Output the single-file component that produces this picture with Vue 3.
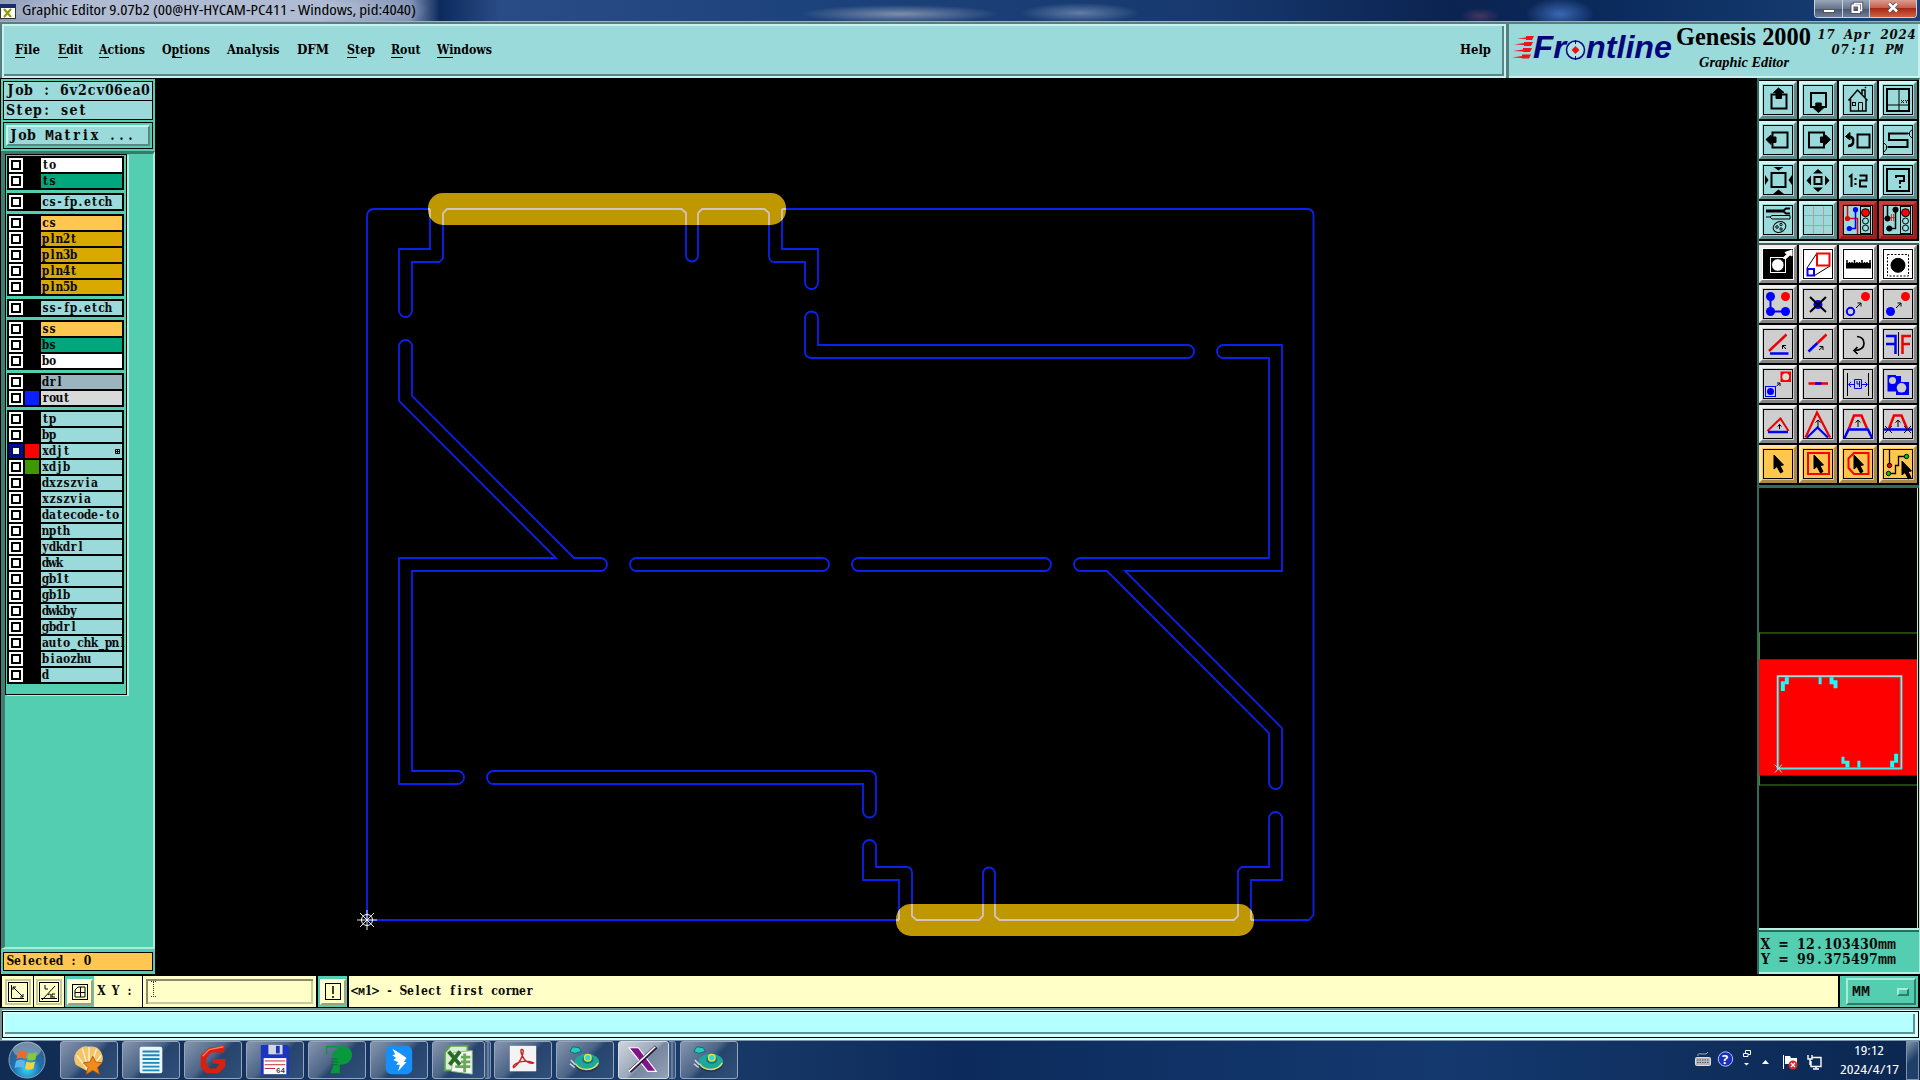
<script setup>
import { h } from 'vue'

// Text fitted to an exact width.
const Fit = (p) =>
  h('svg', { width: p.w + 4, height: p.s * 1.5, style: { display: 'block', overflow: 'visible', flex: 'none' } }, [
    h('text', {
      x: 0, y: p.s * 1.1, textLength: p.w, lengthAdjust: 'spacingAndGlyphs', fill: p.c || '#000',
      'font-family': p.f || '"DejaVu Serif", serif', 'font-size': p.s, 'font-weight': p.b || 700,
      'font-style': p.i ? 'italic' : 'normal', 'font-stretch': 'condensed'
    }, p.t)
  ])
Fit.props = ['t', 'w', 's', 'f', 'b', 'i', 'c']

// Terminal style text: every glyph is centred in a cell of equal width.
// The widest letters take a monospaced face so that they stay inside their cell.
const Cell = (p) => {
  const a = p.a || 7
  const s = p.s || 12
  return h('svg', { width: a * p.t.length, height: s + 3, style: { display: 'block', overflow: 'visible', flex: 'none' } }, [
    h('text', {
      x: [...p.t].map((_, i) => i * a + a / 2).join(' '), y: s - 1, 'text-anchor': 'middle',
      'font-family': '"DejaVu Serif", serif', 'font-size': s, 'font-weight': 700,
      'font-style': p.i ? 'italic' : 'normal', 'font-stretch': 'condensed', fill: '#0a0a0a'
    }, p.t.split(/([mM])/).filter(Boolean).map((part) =>
      /^[mM]$/.test(part)
        ? h('tspan', { 'font-family': '"Liberation Mono", monospace', 'font-size': a / 0.6 }, part)
        : part
    ))
  ])
}
Cell.props = ['t', 'a', 's', 'i']

const menus = [
  { t: 'File', x: 15, w: 25, u: [0, 10] },
  { t: 'Edit', x: 57.5, w: 25, u: [0, 10] },
  { t: 'Actions', x: 99, w: 46, u: [0, 10] },
  { t: 'Options', x: 162, w: 48, u: [10, 10] },
  { t: 'Analysis', x: 227, w: 52.5 },
  { t: 'DFM', x: 297, w: 32 },
  { t: 'Step', x: 346.5, w: 28, u: [0, 10] },
  { t: 'Rout', x: 391, w: 29.5, u: [0, 12] },
  { t: 'Windows', x: 437, w: 55, u: [0, 16] }
].map((m, i, all) => ({ ...m, gap: i ? m.x - all[i - 1].x - all[i - 1].w - 4 : m.x - 4 }))

const W = '#ffffff', G = '#00a67c', B = '#9adada', O = '#ffc650', D = '#d9a900'
const groups = [
  [['to', W], ['ts', G]],
  [['cs-fp.etch', B]],
  [['cs', O], ['pln2t', D], ['pln3b', D], ['pln4t', D], ['pln5b', D]],
  [['ss-fp.etch', B]],
  [['ss', O], ['bs', G], ['bo', W]],
  [['drl', '#9cb4be'], ['rout', '#d9d9d9', '#0a20ff']],
  [['tp', B], ['bp', B], ['xdjt', B, '#ff0000', true], ['xdjb', B, '#3f9800'], ['dxzszvia', B], ['xzszvia', B],
    ['datecode-to', B], ['npth', B], ['ydkdrl', B], ['dwk', B], ['gb1t', B], ['gb1b', B], ['dwkby', B],
    ['gbdrl', B], ['auto_chk_pnl', B], ['biaozhu', B], ['d', B]]
]

const cursor = '<path fill="#000" d="M15 10V24L18 21.500L21.500 28L24 26.500L21 20.500L24.500 20Z"/>'
const light = '<rect x="21.500" y="5.500" width="10" height="27"/><circle cx="26.500" cy="11.700" r="4" fill="#f00"/><circle cx="26.500" cy="20" r="3"/><circle cx="26.500" cy="27" r="3"/>'
const arrow = '<path d="M17 23L22 18M18.500 18H22V21.500"/>'
const up = '<path d="M19 22V15M16.500 17.500L19 15L21.500 17.500"/>'
const trap = '<path stroke="#e00" stroke-width="2.500" d="M10 23.500L15 10.500H22.500L28 23.500"/>'

const tools = [
  '<rect x="12.500" y="13.500" width="15" height="14" stroke-width="2"/><path fill="#000" d="M19.500 7L25 11.500H22.500V17.500H17V11.500H14.500Z"/>',
  '<rect x="12" y="12" width="15" height="14" stroke-width="2"/><path fill="#000" d="M16.800 22H22.200V27H24.500L19.500 31.500L14.500 27H16.800Z"/>',
  '<path stroke-width="1.500" d="M9.500 19.500L18.500 9L28.500 19.500M11.500 18V30H27V18M23 13V9H26V16M26 7L27 6"/><rect x="13.500" y="21.500" width="3" height="3"/><path d="M19.500 30V21.500H23.500V30"/>',
  '<rect x="8" y="8" width="22" height="22" stroke-width="2"/><path d="M8 24H30M20 8V30M22 19L25 22M25 19L22 22M26 19L27.500 20.500L29 19M27.500 20.500V22"/>',
  '<rect x="13.500" y="11.500" width="15" height="15" stroke-width="2"/><path fill="#000" d="M7 18.500L12 14V16H17V21.500H12V23.500Z"/>',
  '<rect x="10" y="11.500" width="15" height="15" stroke-width="2"/><path fill="#000" d="M31.500 18.500L26.500 14V16H21.500V21.500H26.500V23.500Z"/>',
  '<rect x="18.500" y="13.500" width="12" height="13" stroke-width="2"/><path stroke-width="2.500" d="M9 16H12Q15 17 14 22Q13 25 9 25"/><path fill="#000" d="M6.500 15.500L11 11.500V19Z"/>',
  '<path stroke-width="2" d="M29 12.500H10V19H28.500V26H9"/><path d="M33 9L30.500 11V14.500L33 17M28 12.500H31M5 22L7.500 24.500V28L5 31M7 26H10"/>',
  '<rect x="12.500" y="12" width="14" height="14" stroke-width="2"/><path fill="#000" stroke="none" d="M19.500 9.500L14.500 6H24.500ZM9.500 19L6 14V24ZM29.500 19L33 14V24ZM19.500 28.500L25 33H14Z"/>',
  '<rect x="15.500" y="16" width="7" height="7" stroke-width="2"/><path fill="#000" stroke="none" d="M19 8L24 12.500H14ZM7.500 19.500L12 14.500V24.500ZM30.500 19.500L26 14.500V24.500ZM19 31L14 26.500H24Z"/>',
  '<path stroke-width="2" d="M10 16L12.500 14V26M16.500 17V19M16.500 22V24M20.500 14.500H27.500V19.500H21V25.500H28"/>',
  '<rect x="8" y="8" width="22" height="22" stroke-width="2"/><path stroke-width="2" d="M17 17V15H25V20H21V23M21 25V27"/>',
  '<path stroke-width="3" d="M7 10H24"/><path stroke-width="2" d="M31 7.500H27L24 10L27 12.500H31"/><path d="M11 16L13 14.500H31V18H13ZM7 16H11"/><ellipse cx="20.500" cy="26" rx="6.500" ry="5.200" transform="rotate(-25 20.500 26)"/><circle cx="18" cy="26" r="1.300"/><circle cx="22" cy="23.500" r="1.200"/><circle cx="22" cy="28" r="1.200"/>',
  '<path stroke="#b99aa6" d="M14.500 5V33M24.500 5V33M5 14.500H33M5 24.500H33"/>',
  '<path stroke="#e00" stroke-width="1.500" d="M8.500 5V17.500H18.500V33"/><path stroke="#00f" stroke-width="1.500" d="M16.500 9V27.500H10"/><circle cx="16.500" cy="8.700" r="2.600" fill="#00f" stroke="none"/><circle cx="8.500" cy="17.500" r="2.600" fill="#e00" stroke="none"/><circle cx="10.300" cy="27.500" r="2.600" fill="#00f" stroke="none"/>' + light,
  '<path stroke-width="1.500" d="M8.500 5V17.500M16.500 9V27.500H10"/><path stroke="#d33" d="M10 16.500H16M12.500 13V20M14.500 13V20"/><circle cx="16.500" cy="8.700" r="2.600" fill="#000"/><circle cx="8.500" cy="17.500" r="2.600" fill="#000"/><circle cx="10.300" cy="27.500" r="2.600" fill="#000"/>' + light
]
const edits = [
  '<path fill="#000" d="M5 5H33V33H5Z"/><rect x="11.500" y="12.500" width="15" height="15" stroke="#fff"/><circle cx="18.800" cy="20" r="6.300" fill="#fff"/><path fill="#fff" stroke="#fff" d="M24 13L28 9.500L26 7.500L33 5V11L31 9.800L26.500 14Z"/>',
  '<path d="M8 23L18 8M15.500 30.500L31 21"/><rect x="18" y="8.500" width="12.500" height="12" stroke="#f00" stroke-width="2"/><rect x="8.500" y="24" width="6.500" height="6.500" stroke="#00f" stroke-width="2"/>',
  '<path fill="#000" stroke="none" d="M7 18H32V23.500H7Z"/><path stroke-width="1.500" d="M8 15V20M10.500 17V20M13 17V20M15.500 15V20M18 17V20M20.500 17V20M23 15V20M25.500 17V20M28 17V20M31 15V20"/>',
  '<rect x="8.500" y="9.500" width="21" height="21.500" stroke-dasharray="2 1.500"/><circle cx="19" cy="20.300" r="7" fill="#000"/>',
  '<g stroke="none" fill="#00f"><circle cx="11.500" cy="11.500" r="4.500"/><circle cx="11.500" cy="26.500" r="4.500"/><circle cx="26.500" cy="26.500" r="4.500"/><circle cx="26.500" cy="11.500" r="4.500" fill="#f00"/></g><path stroke="#00f" stroke-width="2" d="M11.500 11V26.500H27"/>',
  '<circle cx="19" cy="19.500" r="4.500" fill="#00f" stroke="none"/><path stroke-width="2" d="M11 12L27 27M27 12L11 27"/>',
  '<circle cx="11.500" cy="26.500" r="3.700" stroke="#00f" stroke-width="2"/><circle cx="26.500" cy="11.500" r="4.500" fill="#f00" stroke="none"/>' + arrow,
  '<circle cx="11.500" cy="26.500" r="4.500" fill="#00f" stroke="none"/><circle cx="26.500" cy="11.500" r="4.500" fill="#f00" stroke="none"/>' + arrow,
  '<path stroke="#e00" stroke-width="2.500" d="M10 26L27.500 9.500"/><path stroke="#00f" stroke-width="2.500" d="M11 28.500H29.500"/><path d="M27 24L23.500 20.500M23.500 24V20.500H27"/>',
  '<path stroke="#00f" stroke-width="2.500" d="M9.500 26.500L18.500 18"/><path stroke="#e00" stroke-width="2.500" d="M18.500 18L27.500 9.500"/><path d="M20 25L24 21.500M20.500 21.500H24V25"/>',
  '<path stroke-width="1.700" d="M18 11.500Q25 12 25 18.500Q25 25 15 25.500"/><path stroke-width="1.700" d="M18.500 22L15 25.500L18.500 29"/>',
  '<path stroke="#00f" stroke-width="2.500" d="M7 11H16.500V29M7 19H16.500"/><path d="M19.500 7V31"/><path stroke="#e00" stroke-width="2.500" d="M32 11H23.500V29M23 19H31"/>',
  '<rect x="21.500" y="6.500" width="10.500" height="10.500" fill="#f00" stroke="none"/><circle cx="26.700" cy="11.700" r="3.500" fill="#ddd" stroke="none"/><rect x="6.500" y="21.500" width="10" height="10" stroke="#00f"/><circle cx="11.500" cy="26.500" r="3.500" fill="#00f" stroke="none"/><path d="M17.500 21L20.500 18.500M18 18H21V21"/>',
  '<path stroke="#e00" stroke-width="2.500" d="M9.500 18.500H29"/><path stroke="#00f" stroke-width="2.500" d="M16 18.500H22.500"/>',
  '<path d="M8.500 8V31M29.500 8V31"/><path stroke="#00f" d="M15.500 14.500H22.500V23.500H15.500ZM18 16V19H20.500M20.500 16V22M15 19.500H10M12 17L9.500 19.500L12 22M23 19.500H28M26 17L28.500 19.500L26 22"/>',
  '<path fill="#00f" stroke="none" d="M8.500 10H17V11H22V17H30V30H17V26.500H8.500Z"/><circle cx="13.500" cy="15.500" r="3.500" fill="#ccc" stroke="none"/><circle cx="22.500" cy="22.800" r="4.800" fill="#ccc" stroke="none"/>',
  '<path stroke="#e00" stroke-width="2" d="M8.500 26L21.500 13.500L29.500 26"/><path stroke="#00f" stroke-width="2.500" d="M9 27H29"/><path d="M20.500 24V19.500M18.500 21.500L20.500 19.500L22.500 21.500"/>',
  '<path stroke="#00f" stroke-width="2.200" d="M8 32.500L18.500 22.500L29 32.500"/><path stroke="#e00" stroke-width="2.200" d="M6.500 32.500L18 7.500L31 32.500"/>' + up,
  trap + '<path stroke="#00f" stroke-width="2.500" d="M5.500 33L9.500 24.500H29L33 33"/>' + up,
  trap + '<path stroke="#00f" stroke-width="2.500" d="M5 24.500H33"/><path d="M6 21L13 28M13 21L6 28M25 21L32 28M32 21L25 28"/>' + up,
  cursor,
  '<rect x="9" y="8" width="21" height="21" stroke="#f00" stroke-width="2"/>' + cursor,
  '<path stroke="#f00" stroke-width="2" d="M15 8H29.500V29H15L9.500 23V13.500Z"/>' + cursor,
  '<path stroke-width="1.300" d="M10.500 5V20M9.500 28.500H16.500V20.500H19.500V11.500H27"/><circle cx="10.500" cy="20.500" r="2.200" fill="#e00"/><circle cx="27.500" cy="11.500" r="2.200" fill="#0c0"/><circle cx="9.500" cy="28.500" r="2.200" fill="#0c0"/><g transform="translate(8 6)">' + cursor + '</g>'
]
const toolKind = (i) => (i === 14 || i === 15 ? 'alarm' : '')
const editKind = (i) => (i < 4 ? 'white' : i > 19 ? 'gold' : 'grey')

// Half of the rout contour; the other half is the same path turned by 180 degrees.
const contour =
  'M430.500 209.500V249.500H399.500V311A6.500 6.500 0 0 0 412.500 311V262.500H440L443.500 259V213.500L447.500 209.500H682L686.500 213.500V256A6 6 0 0 0 698.500 256V213.500L702.500 209.500H765L769.500 213.500V257Q770 262.500 775 262.500H805.500V283A6.500 6.500 0 0 0 818.500 283V249.500H782.500V209.500' +
  'M399.500 558.500V784.500H458A6.500 6.500 0 0 0 458 771.500H412.500V571.500H601A6.500 6.500 0 0 0 601 558.500H574.500L412.500 396.500V347A6.500 6.500 0 0 0 399.500 347V401.500L556.500 558.500Z' +
  'M818.500 345.500H1188A6.500 6.500 0 0 1 1188 358.500H812Q805.500 358 805.500 352V318.500A6.500 6.500 0 0 1 818.500 318.500Z' +
  'M637 558.500H823A6.500 6.500 0 0 1 823 571.500H637A6.500 6.500 0 0 1 637 558.500Z'

const disc = '<ellipse cx="20" cy="21" rx="13" ry="8.500" fill="#2c3148"/><ellipse cx="20" cy="19" rx="13" ry="8.500" fill="#1fa79b"/><path d="M8 21Q12 27 20 27T32 20" fill="none" stroke="#d8e070" stroke-width="1.500"/><ellipse cx="21" cy="16.500" rx="6" ry="4.500" fill="#0b7f7a"/><circle cx="21" cy="14.500" r="3.500" fill="#3bd6cc" stroke="#f0e040" stroke-width="1.500"/><path d="M2 8L5 3L12 4L14 8L7 10Z" fill="#29c9bd" stroke="#0b6a70"/><path d="M3 17L8 22M2 21L7 25" stroke="#d8d8e8" stroke-width="1.500"/>'
const apps = [
  { g: 4, w: 58, s: '<path d="M18 30L4 22Q0 15 5 8Q11 1 18 3Q27 1 31 9Q35 17 30 22Z" fill="#f3c46c"/><path d="M18 29L5 12M18 29L11 5M18 29L18 3M18 29L26 5M18 29L31 12" stroke="#fff0c8" stroke-width="1.500"/><path d="M22 13L25 19L32 20L27 25L29 32L22 28L15 32L17 25L12 20L19 19Z" fill="#f08a1d" stroke="#b85a08"/>' },
  { g: 4, w: 58, s: '<rect x="6" y="3" width="24" height="28" rx="2" fill="#e8f6fc"/><path d="M9 8H27M9 12H27M9 16H27M9 20H27M9 24H27M9 28H27" stroke="#1f86b8" stroke-width="2"/>' },
  { g: 4, w: 58, s: '<path d="M30 2V9H16L11 15V22L15 26H21L25 21H18V16H31V24L24 31H11L5 25V12L14 4Z" fill="#d8200f"/><path d="M29 3L14 6L7 13" stroke="#ff7a60" fill="none" stroke-width="1.500"/>' },
  { g: 4, w: 58, s: '<path d="M3 1H31L33 3V32H3Z" fill="#1c35c0"/><rect x="11" y="1" width="15" height="10" fill="#d4d8e4"/><rect x="19" y="2" width="4" height="8" fill="#1c35c0"/><rect x="6" y="15" width="24" height="17" fill="#fff"/><path d="M7 18H29M7 22H29M7 26H18" stroke="#c02030"/><text x="19" y="31" font-size="8" font-weight="700" fill="#444" font-family="Liberation Mono, monospace">64</text>' },
  { g: 4, w: 58, s: '<path d="M6 2H24Q35 4 34 13Q32 22 21 22V31H11L14 24V11L22 3Z" fill="#07993c"/><path d="M7 11V3H22L13 11" stroke="#07993c" stroke-width="1.500"/><path d="M12 16H19M12 19H19M12 22H19" stroke="#0a6a38"/>' },
  { g: 4, w: 58, s: '<rect x="4" y="2" width="28" height="30" rx="6" fill="#1490f8"/><path d="M11 5Q20 10 26 15L23 19H26L17 29L19 22H15L17 19L12 17L15 15L11 12L14 11Z" fill="#fff"/>' },
  { g: 4, w: 53, stack: 6, s: '<path d="M3 9L9 2H27V28H3Z" fill="#d9ecd5" stroke="#5aa04a" stroke-width="2"/><path d="M12 9L32 7V32L10 29Z" fill="#f4f8f2" stroke="#86b878"/><path d="M20 14H30M20 19H30M14 24H30M24 10V30" stroke="#6aa85a" stroke-width="3"/><path d="M7 8L19 22M19 8L8 22" stroke="#276b25" stroke-width="4"/>' },
  { g: 3, w: 58, s: '<rect x="4" y="2" width="28" height="27" fill="#f4f2f2"/><path d="M16 6Q20 5 17 13Q14 21 8 25Q6 22 15 19Q24 17 29 20Q26 22 20 17Q15 10 16 6Z" fill="none" stroke="#c8202a" stroke-width="1.500"/>' },
  { g: 4, w: 58, s: disc },
  { g: 4, w: 51, stack: 7, on: true, s: '<path d="M2 4H12L31 29H22Z" fill="#80128a" stroke="#fff" stroke-width="1.200"/><path d="M31 3L3 29" stroke="#26183a" stroke-width="4"/><path d="M30 3L2 29" stroke="#fff" stroke-width="1.700"/>' },
  { g: 4, w: 58, s: disc }
]
</script>

<template>
  <div class="screen">
    <header class="title">
      <svg class="xicon" width="16" height="15" viewBox="0 0 16 15"><rect x=".5" y=".5" width="15" height="14" fill="#fff" stroke="#333" /><path d="M0 0H16V4H0Z" fill="#1a2d70" /><path d="M4 5L11 13M11 5L4 13" stroke="#8f9c00" stroke-width="2" /></svg>
      <Fit t="Graphic Editor 9.07b2 (00@HY-HYCAM-PC411 - Windows, pid:4040)" :w="394" :s="14" f="'Open Sans','Noto Sans',sans-serif" :b="400" />
      <div class="winbtns">
        <span class="wb min"><i></i></span>
        <span class="wb max"><svg width="13" height="12" fill="none"><path d="M4.500 3V1.500H11.500V8.500H9.500" stroke="#556" stroke-width="3.500" /><rect x="2.500" y="3.500" width="6.500" height="6.500" stroke="#556" stroke-width="4" /><path d="M4.500 3V1.500H11.500V8.500H9.500" stroke="#fff" stroke-width="1.500" /><rect x="2.500" y="3.500" width="6.500" height="6.500" stroke="#fff" stroke-width="2" /></svg></span>
        <span class="wb close"><svg width="12" height="11"><path d="M2 1.500L10 9.500M10 1.500L2 9.500" stroke="#555" stroke-width="4" /><path d="M2 1.500L10 9.500M10 1.500L2 9.500" stroke="#fff" stroke-width="2.500" /></svg></span>
      </div>
    </header>

    <div class="menurow">
      <nav class="menubar">
        <span v-for="m in menus" :key="m.t" class="menu" :style="{ marginLeft: m.gap + 'px' }">
          <Fit :t="m.t" :w="m.w" :s="13.5" />
          <u v-if="m.u" :style="{ left: m.u[0] + 'px', width: m.u[1] + 'px' }"></u>
        </span>
        <span class="menu help"><Fit t="Help" :w="31" :s="13.5" /></span>
      </nav>
      <div class="brand">
        <svg width="409" height="50" viewBox="1509 26 409 50" font-family="'Liberation Serif',serif">
          <g fill="#f0141e"><path d="M1517 40.500L1526 39.500V38H1534L1532 42H1526V41ZM1514 46.500L1524 45V44H1533L1531 48H1524V47ZM1513 53L1523 51.500V50H1532L1530 54H1523V53.500ZM1512 59.500L1522 58V56.500H1531L1529 60.500H1522V60Z" /></g>
          <g fill="#06067c" font-family="'Liberation Sans',sans-serif" font-size="31" font-weight="700" font-style="italic">
            <text x="1533" y="60" textLength="33" lengthAdjust="spacingAndGlyphs">Fr</text>
            <text x="1586" y="60" textLength="86" lengthAdjust="spacingAndGlyphs">ntline</text>
          </g>
          <circle cx="1575.500" cy="52" r="9" fill="#aee6e8" stroke="#06067c" stroke-width="1.500" />
          <path d="M1575.500 48L1579.500 52L1575.500 56L1571.500 52Z" fill="#f01010" /><path d="M1575.500 42V46M1575.500 58V62" stroke="#06067c" />
          <text x="1676" y="46.500" font-size="25" textLength="135" lengthAdjust="spacingAndGlyphs" font-weight="700">Genesis 2000</text>
          <text x="1699" y="68.500" font-size="14" font-weight="700" font-style="italic" textLength="90" lengthAdjust="spacingAndGlyphs">Graphic Editor</text>
        </svg>
        <div class="clock"><Cell t="17 Apr 2024" :a="9" :s="13" i="1" /><Cell t="07:11 PM" :a="9" :s="13" i="1" /></div>
      </div>
    </div>

    <main class="work">
      <aside class="left">
        <div class="info"><Cell t="Job : 6v2cv06ea0" :a="9" :s="14" /></div>
        <div class="info second"><Cell t="Step: set" :a="9" :s="14" /></div>
        <div class="matrix"><button><Cell t="Job Matrix ..." :a="9" :s="14" /></button></div>
        <div class="layers">
          <div class="list">
            <div v-for="(g, gi) in groups" :key="gi" class="group">
              <div v-for="l in g" :key="l[0]" class="row">
                <span class="chk" :class="{ on: l[3] }"><i></i></span>
                <span class="sw" :style="{ background: l[2] || '#000' }"></span>
                <span class="nm" :style="{ background: l[1] }">
                  <Cell :t="l[0]" />
                  <svg v-if="l[3]" class="mark" width="5" height="5"><path d="M.5 .5H4.500V4.500H.5ZM.5 2.500H4.500M2.500 .5V4.500" fill="none" stroke="#000" /></svg>
                </span>
              </div>
            </div>
          </div>
        </div>
        <div class="selected"><Cell t="Selected : 0" /></div>
      </aside>

      <svg class="canvas" width="1602" height="897" viewBox="155 78 1602 897">
        <defs>
          <g id="lines" fill="none" stroke-width="1.800">
            <path d="M367 920V217Q367 209 374 209H430M782 209H1308Q1313.500 210 1313.500 215V915L1309 920H1251M899 920H367" />
            <path :d="contour" transform="translate(-.5 -.5)" />
            <path :d="contour" transform="translate(1681.500 1129.500) rotate(180)" />
          </g>
          <clipPath id="pads"><rect x="428" y="193" width="358" height="32" rx="15" /><rect x="896" y="904" width="358" height="32" rx="15" /></clipPath>
        </defs>
        <use href="#lines" stroke="#0b22ee" />
        <rect x="428" y="193" width="358" height="32" rx="15" fill="#bf9800" />
        <rect x="896" y="904" width="358" height="32" rx="15" fill="#bf9800" />
        <g clip-path="url(#pads)"><use href="#lines" stroke="#d4c2c0" /></g>
        <g stroke="#fff" fill="none"><circle cx="367" cy="920" r="5.500" /><path d="M357 920H377M367 910V930M360 913L374 927M374 913L360 927" stroke-width=".9" /></g>
      </svg>

      <aside class="right">
        <div class="tools">
          <button v-for="(t, i) in tools" :key="i" class="tb" :class="toolKind(i)"><svg width="38" height="38" viewBox="0 0 38 38" fill="none" stroke="#000"><rect x="4.500" y="4.500" width="29" height="29" /><g v-html="t"></g></svg></button>
        </div>
        <div class="tools edit">
          <button v-for="(t, i) in edits" :key="i" class="tb" :class="editKind(i)"><svg width="38" height="38" viewBox="0 0 38 38" fill="none" stroke="#000"><rect x="4.500" y="4.500" width="29" height="29" /><g v-html="t"></g></svg></button>
        </div>
        <svg class="over" width="159" height="440" viewBox="1759 488 159 440">
          <path d="M1759 632.500H1918M1759 785.500H1918M1759.500 632V786" stroke="#4a8a1c" fill="none" />
          <rect x="1758" y="659" width="160" height="117" fill="#f00" />
          <path d="M1778 769V676.500H1902V769" fill="none" stroke="#6f6060" stroke-width="3" /><path d="M1777.800 769V676H1902.300V769" fill="none" stroke="#a9dada" stroke-width="1.700" />
          <path d="M1777 769H1903" stroke="#4de8e8" stroke-width="2" />
          <path fill="#1ff" d="M1785 677H1789V684H1785V691H1781V681H1785ZM1819 677H1822V684H1819ZM1830 677H1834V680H1838V688H1834V684H1830ZM1842 757H1845V761H1850V768H1846V764H1842ZM1858 761H1861V768H1858ZM1895 754H1899V763H1895V768H1891V761H1895Z" />
          <path d="M1775 765L1782 773M1782 765L1775 773" stroke="#9ee" />
        </svg>
        <div class="xy"><Cell t="X = 12.103430mm" :a="9" :s="14" /><Cell t="Y = 99.375497mm" :a="9" :s="14" /></div>
      </aside>
    </main>

    <div class="cmd">
      <span class="cb"><svg viewBox="1 1 22 22" fill="none" stroke="#000"><rect x="2.500" y="2.500" width="19" height="19" /><path d="M5.500 5V18.500H18M7 7L17 17M7 10V7H10M17 14V17H14" /></svg></span>
      <span class="cb mid"><svg viewBox="1 1 22 22" fill="none" stroke="#000"><rect x="2.500" y="2.500" width="19" height="19" /><path d="M4 18.500H20M5 20L18 6M8 5V9H11M11 15Q14 12 14 18M18 14H15V17H18" /></svg></span>
      <span class="cb teal"><svg viewBox="1 1 22 22" fill="none" stroke="#000"><rect x="4.500" y="4.500" width="15" height="15" /><path d="M7 10L10 7H17V17H7ZM7 12.500H17M12.500 7V17" /></svg></span>
      <div class="xylab"><Cell t="X Y :" /></div>
      <div class="field"><svg width="5" height="16"><path d="M2.500 1V15M0 .5H5M0 15.500H5" stroke="#333" stroke-dasharray="1 1" /></svg></div>
      <span class="cb teal bang"><svg viewBox="1 1 22 22" fill="none" stroke="#000"><rect x="4.500" y="3.500" width="15" height="16" /><path d="M12 6V14M12 16V18" stroke-width="1.500" /></svg></span>
      <div class="prompt"><Cell t="<M1> - Select first corner" /></div>
      <div class="unit"><button><Cell t="MM" :a="9" :s="13" /><i></i></button></div>
    </div>

    <div class="status"><div class="stbox"></div></div>

    <footer class="task">
      <svg class="orb" width="38" height="38" viewBox="0 0 38 38">
        <defs><radialGradient id="og" cx=".5" cy=".75" r=".75"><stop offset="0" stop-color="#39d7f5" /><stop offset=".5" stop-color="#1f6fb0" /><stop offset="1" stop-color="#3d5672" /></radialGradient></defs>
        <circle cx="19" cy="19" r="18" fill="url(#og)" stroke="#86a6c0" /><ellipse cx="19" cy="9" rx="14" ry="8" fill="#fff" opacity=".3" />
        <path d="M10 11Q14 8 19 11L17.500 18Q13 16 8.500 18Z" fill="#ee6a2a" /><path d="M20.500 11.500Q24 13.500 29 11L27.500 18.500Q23 20.500 19 18.500Z" fill="#8bc53a" /><path d="M8 20Q12 17.500 17 20L15.500 27Q11 25 6.500 27Z" fill="#5fb6ee" /><path d="M18.500 20.500Q22.500 22.500 27 20.500L25.500 27.500Q21 30 17 27.500Z" fill="#fbd03c" />
      </svg>
      <template v-for="(a, i) in apps" :key="i">
        <span class="app" :class="{ on: a.on }" :style="{ width: a.w + 'px', marginLeft: (i ? a.g : 0) + 'px' }"><svg width="34" height="34" viewBox="0 0 36 34" fill="none"><g v-html="a.s"></g></svg></span>
        <span v-if="a.stack" class="stack" :style="{ width: a.stack + 'px' }"></span>
      </template>
      <svg class="tray" width="142" height="40" viewBox="1690 1040 142 40" fill="none">
        <rect x="1695.500" y="1056.500" width="15" height="8" rx="1" fill="#b5b8b8" stroke="#ddd" /><path d="M1697 1059H1709M1697 1061.500H1709" stroke="#555" stroke-dasharray="1.500 1" /><path d="M1698 1055Q1697 1052 1702 1053T1708 1051" stroke="#aaa" />
        <circle cx="1725.500" cy="1058" r="7.200" fill="#1a2fc0" stroke="#b8c4e8" /><text x="1722" y="1063" font-size="13" font-weight="700" fill="#fff" font-family="'Open Sans',sans-serif">?</text>
        <path d="M1743.500 1052.500H1748V1055.500H1743.500ZM1745.500 1052V1049.500H1750.500V1053.500H1748" stroke="#fff" /><path d="M1744 1062H1749L1746.500 1064.500Z" fill="#fff" />
        <path d="M1762 1063L1765.500 1059L1769 1063Z" fill="#fff" />
        <path d="M1783.500 1054V1068" stroke="#fff" /><path d="M1785 1055H1790L1791 1057H1797V1063H1785Z" fill="#fff" /><circle cx="1793" cy="1064" r="4.500" fill="#d82828" /><path d="M1791 1062L1795 1066M1795 1062L1791 1066" stroke="#fff" stroke-width="1.300" />
        <path d="M1812 1056.500H1821V1065.500H1811V1060M1808 1054V1058H1812V1054M1810 1058V1064M1813 1068H1819M1816 1066V1068" stroke="#fff" stroke-width="1.400" />
      </svg>
      <div class="time"><Fit t="19:12" :w="30" :s="13" f="'Open Sans',sans-serif" :b="400" c="#fff" /><Fit t="2024/4/17" :w="59" :s="13" f="'Open Sans',sans-serif" :b="400" c="#fff" /></div>
      <span class="peek"></span>
    </footer>
  </div>
</template>

<style>
html, body { margin: 0; background: #000; overflow: hidden; }
</style>

<style scoped>
* { box-sizing: border-box; }
button { padding: 0; margin: 0; font: inherit; }
.screen { width: 1920px; height: 1080px; display: flex; flex-direction: column; overflow: hidden; background: #000; }

.title { height: 22px; flex: none; display: flex; align-items: flex-start; border-bottom: 1px solid #9fb0c0;
  background:
    radial-gradient(ellipse 230px 30px at 200px 10px, rgba(178,190,212,.95) 60%, transparent 100%),
    radial-gradient(ellipse 100px 9px at 900px 14px, rgba(190,195,205,.6), transparent),
    radial-gradient(ellipse 60px 10px at 1080px 13px, rgba(170,190,215,.5), transparent),
    radial-gradient(ellipse 20px 8px at 1480px 16px, rgba(130,70,110,.5), transparent),
    radial-gradient(ellipse 34px 16px at 1560px 14px, rgba(70,120,200,.8), transparent),
    linear-gradient(90deg, #8794b0 0, #7f90b4 410px, #0c2a5c 440px, #2a4c86 500px, #1d437c 800px, #17396f 1200px, #0b2350 1450px, #0a2a5c 1600px, #1a4276 1920px); }
.xicon { margin: 4px 6px 0 0; flex: none; }
.winbtns { margin-left: auto; margin-right: 3px; display: flex; height: 18px; width: 103px; border: 1px solid #c6cfdc; border-top: 0; border-radius: 0 0 4px 4px; overflow: hidden; }
.wb { display: flex; align-items: center; justify-content: center; background: linear-gradient(#9aa6b8, #66748c 50%, #45556f 51%, #6f7f98); width: 28px; border-right: 1px solid #c6cfdc; }
.wb.max { width: 27px; }
.wb.close { flex: 1; border: 0; background: linear-gradient(#dc9c90, #c4604f 45%, #a82814 50%, #cf6240); }
.wb svg { margin-top: -2px; overflow: visible; }
.min i { width: 12px; height: 4px; background: #fff; border: 1px solid #555; margin-top: 4px; }

.menurow { height: 56px; flex: none; display: flex; background: #567f80; }
.menubar { width: 1504px; margin-left: 2px; margin-top: 2px; display: flex; align-items: flex-start; background: #9adada;
  border: 2px solid #c8f2f0; box-shadow: inset -2px -2px 0 #5b8686; padding-top: 13px; }
.menu { position: relative; display: block; }
.menu u { position: absolute; top: 18px; height: 1px; background: #000; }
.help { margin-left: auto; margin-right: 9px; }
.brand { flex: 1; margin-left: 3px; margin-top: 2px; display: flex; background: #9adada; border-right: 2px solid #c8f2f0; border-bottom: 2px solid #c8f2f0; position: relative; overflow: hidden; }
.clock { position: absolute; left: 308px; top: 3px; display: flex; flex-direction: column; align-items: center; gap: 0; height: 34px; }
.clock > * + * { margin-top: -1px; }

.work { height: 897px; flex: none; display: flex; }
.left { width: 154px; margin-left: 1px; height: 895px; margin-top: 1px; background: #54ceb0; padding: 2px; display: flex; flex-direction: column; border-top: 0; }
.info { height: 20px; border: 1px solid #000; background: #9adada; padding: 1px 0 0 2px; flex: none; }
.second { margin-top: -1px; }
.info > * { margin-top: -1px; }
.second > * { margin-top: 0; }
.matrix { margin-top: 2px; height: 27px; border: 1px solid #000; padding: 2px; flex: none; }
.matrix button { width: 100%; height: 21px; display: block; background: #9adada; border: 2px solid; border-color: #c8f2f0 #5b8686 #5b8686 #c8f2f0; padding: 0; }
.matrix button > * { margin-top: -1px; margin-left: 1px; }
.layers { margin: 2px -2px 0; flex: 1; background: #54ceb0; border-top: 3px solid #357a6b; border-left: 4px solid #3f7f72; border-right: 2px solid #a8ecd8; border-bottom: 2px solid #a8ecd8; }
.list { width: 122px; height: 541px; border: 1px solid #000; box-shadow: 2px 1px 0 #b4f0e0; padding: 1px 0 0 1px; display: flex; flex-direction: column; gap: 3px; }
.group { width: 117px; background: #000; padding-bottom: 2px; }
.row { height: 16px; padding: 2px 0 0 2px; display: flex; gap: 2px; }
.chk { width: 14px; height: 14px; background: #fff; display: flex; align-items: center; justify-content: center; }
.chk i { width: 10px; height: 10px; border: 2px solid #000; background: #fff; }
.chk.on { background: #0008a8; }
.chk.on i { border-color: #001060; }
.sw { width: 14px; height: 14px; }
.nm { width: 81px; height: 14px; position: relative; padding-left: 1px; }
.mark { position: absolute; right: 2px; top: 5px; }
.selected { margin-top: 3px; margin-bottom: 1px; height: 19px; border: 1px solid #000; background: #ffc650; padding: 1px 0 0 3px; flex: none; }

.canvas { flex: none; display: block; }

.right { width: 163px; display: flex; flex-direction: column; background: #000; border-left: 2px solid #2f6a5e; border-right: 1px solid #a8ecd8; height: 896px; border-top: 2px solid #2f6a5e; }
.tools { display: grid; grid-template-columns: repeat(4, 38px); gap: 2px; padding: 1px 0 2px 0; border-bottom: 2px solid #c8f2f0; height: 163px; flex: none; }
.tools.edit { height: 245px; padding-top: 0; border-top: 2px solid #555; border-bottom: 3px solid #2f6a5e; }
.tb { width: 38px; height: 38px; border: 3px solid; border-color: #d2f6f4 #5b8a8a #5b8a8a #d2f6f4; background: #9adada; display: block; }
.tb svg { display: block; margin: -3px; }
.tb.alarm { border-color: #cc3c3c #a01c1c #a01c1c #cc3c3c; box-shadow: inset 0 0 0 1px #b42c2c; }
.tb.white { background: #fff; border-color: #eee #8a8a8a #8a8a8a #eee; }
.tb.grey { background: #cecece; border-color: #f0f0f0 #858585 #858585 #f0f0f0; }
.tb.gold { background: #ffc650; border-color: #ffe4a8 #a98a4a #a98a4a #ffe4a8; }
.over { display: block; flex: none; border-right: 1px solid #a8ecd8; }
.xy { height: 46px; border-top: 2px solid #b8f0e4; border-bottom: 2px solid #b8f0e4; background: #54ceb0; box-shadow: inset 0 2px 0 #2f6a5e; padding: 6px 0 0 2px; flex: none; }
.xy > * + * { margin-top: -2px; }

.cmd { height: 33px; flex: none; padding-top: 1px; display: flex; border-bottom: 1px solid #000; background: #000; }
.cb { width: 31px; height: 31px; margin-left: 1px; background: #ffffc8; display: flex; align-items: center; justify-content: center; }
.cb:first-child { margin-left: 2px; }
.cb.mid { width: 30px; }
.cb svg { border: 2px solid #c8c8a0; width: 26px; height: 26px; }
.cb.teal { width: 29px; background: #54ceb0; }
.cb.teal svg { background: #ffffc8; border-color: #ffffe8 #a0a080 #a0a080 #ffffe8; }
.xylab { width: 48px; background: #ffffc8; padding: 8px 0 0 4px; }
.field { margin-left: 1px; width: 173px; background: #ffffc8; border: 3px solid #ffffc8; padding: 2px 0 0 5px; box-shadow: inset 2px 2px 0 #8c8c6c, inset -2px -2px 0 #c9c9a0; }
.cb.bang { margin-left: 2px; }
.prompt { margin-left: 2px; flex: 1; background: #ffffc8; padding: 8px 0 0 2px; }
.unit { width: 78px; margin: 0 2px; background: #54ceb0; padding: 2px 2px 2px 6px; }
.unit button { width: 70px; height: 27px; border: 2px solid; border-color: #a8ecd8 #2f7a68 #2f7a68 #a8ecd8; background: #54ceb0; display: flex; align-items: center; justify-content: space-between; padding: 0 5px 0 4px; }
.unit i { width: 12px; height: 8px; border: 2px solid; border-color: #a8ecd8 #2f7a68 #2f7a68 #a8ecd8; }

.status { height: 32px; flex: none; background: #d8ffff; border-top: 2px solid #6f8f92; border-left: 2px solid #6f8f92; padding: 1px 1px 2px 0; }
.stbox { height: 27px; border: 1px solid #000; background: #b4ffff; box-shadow: inset 2px 2px 0 #d8ffff, inset -3px -3px 0 #d8ffff, inset -5px -5px 0 #5b9292; }

.task { height: 40px; flex: none; display: flex; align-items: flex-start; border-top: 1px solid #7f93aa; background: linear-gradient(90deg, #112c52, #1b3c6b 35%, #0c2b5c 50%, #14396f 75%, #0b2750); }
.orb { margin: 0 14px 0 8px; flex: none; }
.app { height: 38px; flex: none; border: 1px solid #93a6bd; border-radius: 3px; background: linear-gradient(135deg, #8796ae 0, #4c6587 45%, #27446d 55%, #2f4f7a); display: flex; align-items: center; justify-content: center; }
.app.on { background: linear-gradient(135deg, #cfd5dd, #9aa7b8 50%, #76879f 55%, #93a2b5); border-color: #d5dde6; }
.stack { height: 38px; flex: none; border: 1px solid #7f93ad; border-left: 0; border-radius: 0 3px 3px 0; background: linear-gradient(90deg, #3c5880 2px, #8fa2ba 3px, #3c5880 4px); }
.tray { margin-left: auto; flex: none; }
.time { width: 74px; height: 39px; display: flex; flex-direction: column; align-items: center; padding: 0 0 0 4px; color: #fff; }
.time > * + * { margin-top: -1px; }
.peek { width: 13px; height: 39px; margin-right: 1px; border: 1px solid #7d92ab; background: linear-gradient(135deg, #8496ad, #1f3e68 50%); flex: none; }
</style>
